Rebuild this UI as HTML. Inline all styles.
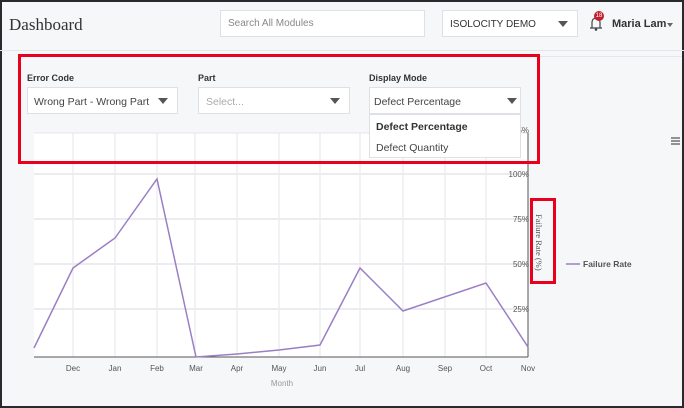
<!DOCTYPE html><html><head><style>
*{margin:0;padding:0;box-sizing:border-box}
body{width:684px;height:408px;overflow:hidden;background:#2a2a2e;font-family:"Liberation Sans",sans-serif;position:relative}
.pg{position:absolute;left:2px;top:2px;width:680px;height:404px;background:#f6f7f9}
.a{position:absolute}
.box{position:absolute;background:#fff;border:1px solid #dde0e4;font-size:10.5px;color:#555}
.tri{position:absolute;width:0;height:0;border-left:5px solid transparent;border-right:5px solid transparent;border-top:6px solid #555}
.lbl{position:absolute;font-size:9px;color:#333;font-weight:bold}
</style></head><body><div class="pg"></div>
<div class="a" style="left:9px;top:15px;font-family:'Liberation Serif',serif;font-size:17px;color:#333">Dashboard</div>
<div class="box" style="left:220px;top:10px;width:205px;height:27px;padding:7px 7px;color:#888;font-size:10px">Search All Modules</div>
<div class="box" style="left:442px;top:10px;width:136px;height:27px;padding:8px 7px;font-size:10px;color:#333">ISOLOCITY DEMO</div>
<div class="tri" style="left:558px;top:21px"></div>
<svg class="a" style="left:588px;top:14px" width="16" height="18" viewBox="0 0 16 18"><path d="M4 14V8a4 4 0 0 1 8 0v6h2H2z" fill="none" stroke="#444" stroke-width="1.2"/><circle cx="8" cy="15.5" r="1.3" fill="#444"/></svg>
<div class="a" style="left:594px;top:11px;width:10px;height:10px;border-radius:5px;background:#c02030;color:#fff;font-size:6px;text-align:center;line-height:10px">18</div>
<div class="a" style="left:612px;top:18px;font-size:11px;font-weight:bold;color:#333">Maria Lam</div>
<div class="tri" style="left:667px;top:23px;border-width:4px 3px 0;border-top-color:#666"></div>
<div class="a" style="left:0;top:50px;width:684px;height:1px;background:#e4e6ea"></div>
<div class="a" style="left:540px;top:56px;width:142px;height:1px;background:#e4e6ea"></div>
<svg class="a" style="left:0;top:0" width="684" height="408">
<rect x="34" y="133" width="494" height="224" fill="#fff"/>
<g stroke="#e6e6ea" stroke-width="1">
<path d="M73 133V357M115 133V357M157 133V357M195 133V357M237 133V357M279 133V357M320 133V357M360 133V357M403 133V357M445 133V357M486 133V357"/>
<path d="M34 133H528" /></g>
<g stroke="#ececf0" stroke-width="2"><path d="M34 174H528M34 219H528M34 264H528M34 309H528"/></g>
<path d="M34 357H528M528 133V357" stroke="#555" stroke-width="1"/>
<polyline fill="none" stroke="#9b7fc4" stroke-width="1.5" points="34,348 73,268 115,238 157,179 196,357 237,354 279,350 320,345 360,268 403,311 486,283 528,347"/>
<g font-family="Liberation Sans" font-size="8" fill="#555" text-anchor="middle">
<text x="73" y="371">Dec</text><text x="115" y="371">Jan</text><text x="157" y="371">Feb</text><text x="196" y="371">Mar</text><text x="237" y="371">Apr</text><text x="279" y="371">May</text><text x="320" y="371">Jun</text><text x="360" y="371">Jul</text><text x="403" y="371">Aug</text><text x="445" y="371">Sep</text><text x="486" y="371">Oct</text><text x="528" y="371">Nov</text>
<text x="282" y="386" fill="#999">Month</text></g>
<g font-family="Liberation Sans" font-size="8" fill="#555" text-anchor="end">
<text x="529" y="133">5%</text><text x="529" y="177">100%</text><text x="529" y="222">75%</text><text x="529" y="267">50%</text><text x="529" y="312">25%</text></g>
<text x="536" y="214" font-family="Liberation Serif" font-size="8.5" fill="#555" transform="rotate(90 536 214)">Failure Rate (%)</text>
<path d="M566 264H580" stroke="#9b7fc4" stroke-width="1.5"/>
<text x="583" y="267" font-family="Liberation Sans" font-size="8.5" font-weight="bold" fill="#555">Failure Rate</text>
<path d="M671 138h9M671 141h9M671 144h9" stroke="#555" stroke-width="1.2"/>
</svg>
<div class="lbl" style="left:27px;top:73px">Error Code</div>
<div class="box" style="left:27px;top:87px;width:151px;height:27px;padding:8px 6px;color:#444">Wrong Part - Wrong Part</div>
<div class="tri" style="left:158px;top:98px"></div>
<div class="lbl" style="left:198px;top:73px">Part</div>
<div class="box" style="left:198px;top:87px;width:152px;height:27px;padding:8px 7px;color:#aaa">Select...</div>
<div class="tri" style="left:330px;top:98px"></div>
<div class="lbl" style="left:369px;top:73px">Display Mode</div>
<div class="box" style="left:369px;top:87px;width:152px;height:27px;padding:8px 4px;color:#444">Defect Percentage</div>
<div class="tri" style="left:507px;top:98px"></div>
<div class="box" style="left:369px;top:114px;width:152px;height:44px;color:#444">
<div style="position:absolute;left:6px;top:6px;font-weight:bold;color:#333">Defect Percentage</div>
<div style="position:absolute;left:6px;top:27px">Defect Quantity</div></div>
<div class="a" style="left:18px;top:54px;width:522px;height:110px;border:3px solid #e8001c"></div>
<div class="a" style="left:530px;top:198px;width:26px;height:86px;border:3px solid #e8001c"></div>
</body></html>
